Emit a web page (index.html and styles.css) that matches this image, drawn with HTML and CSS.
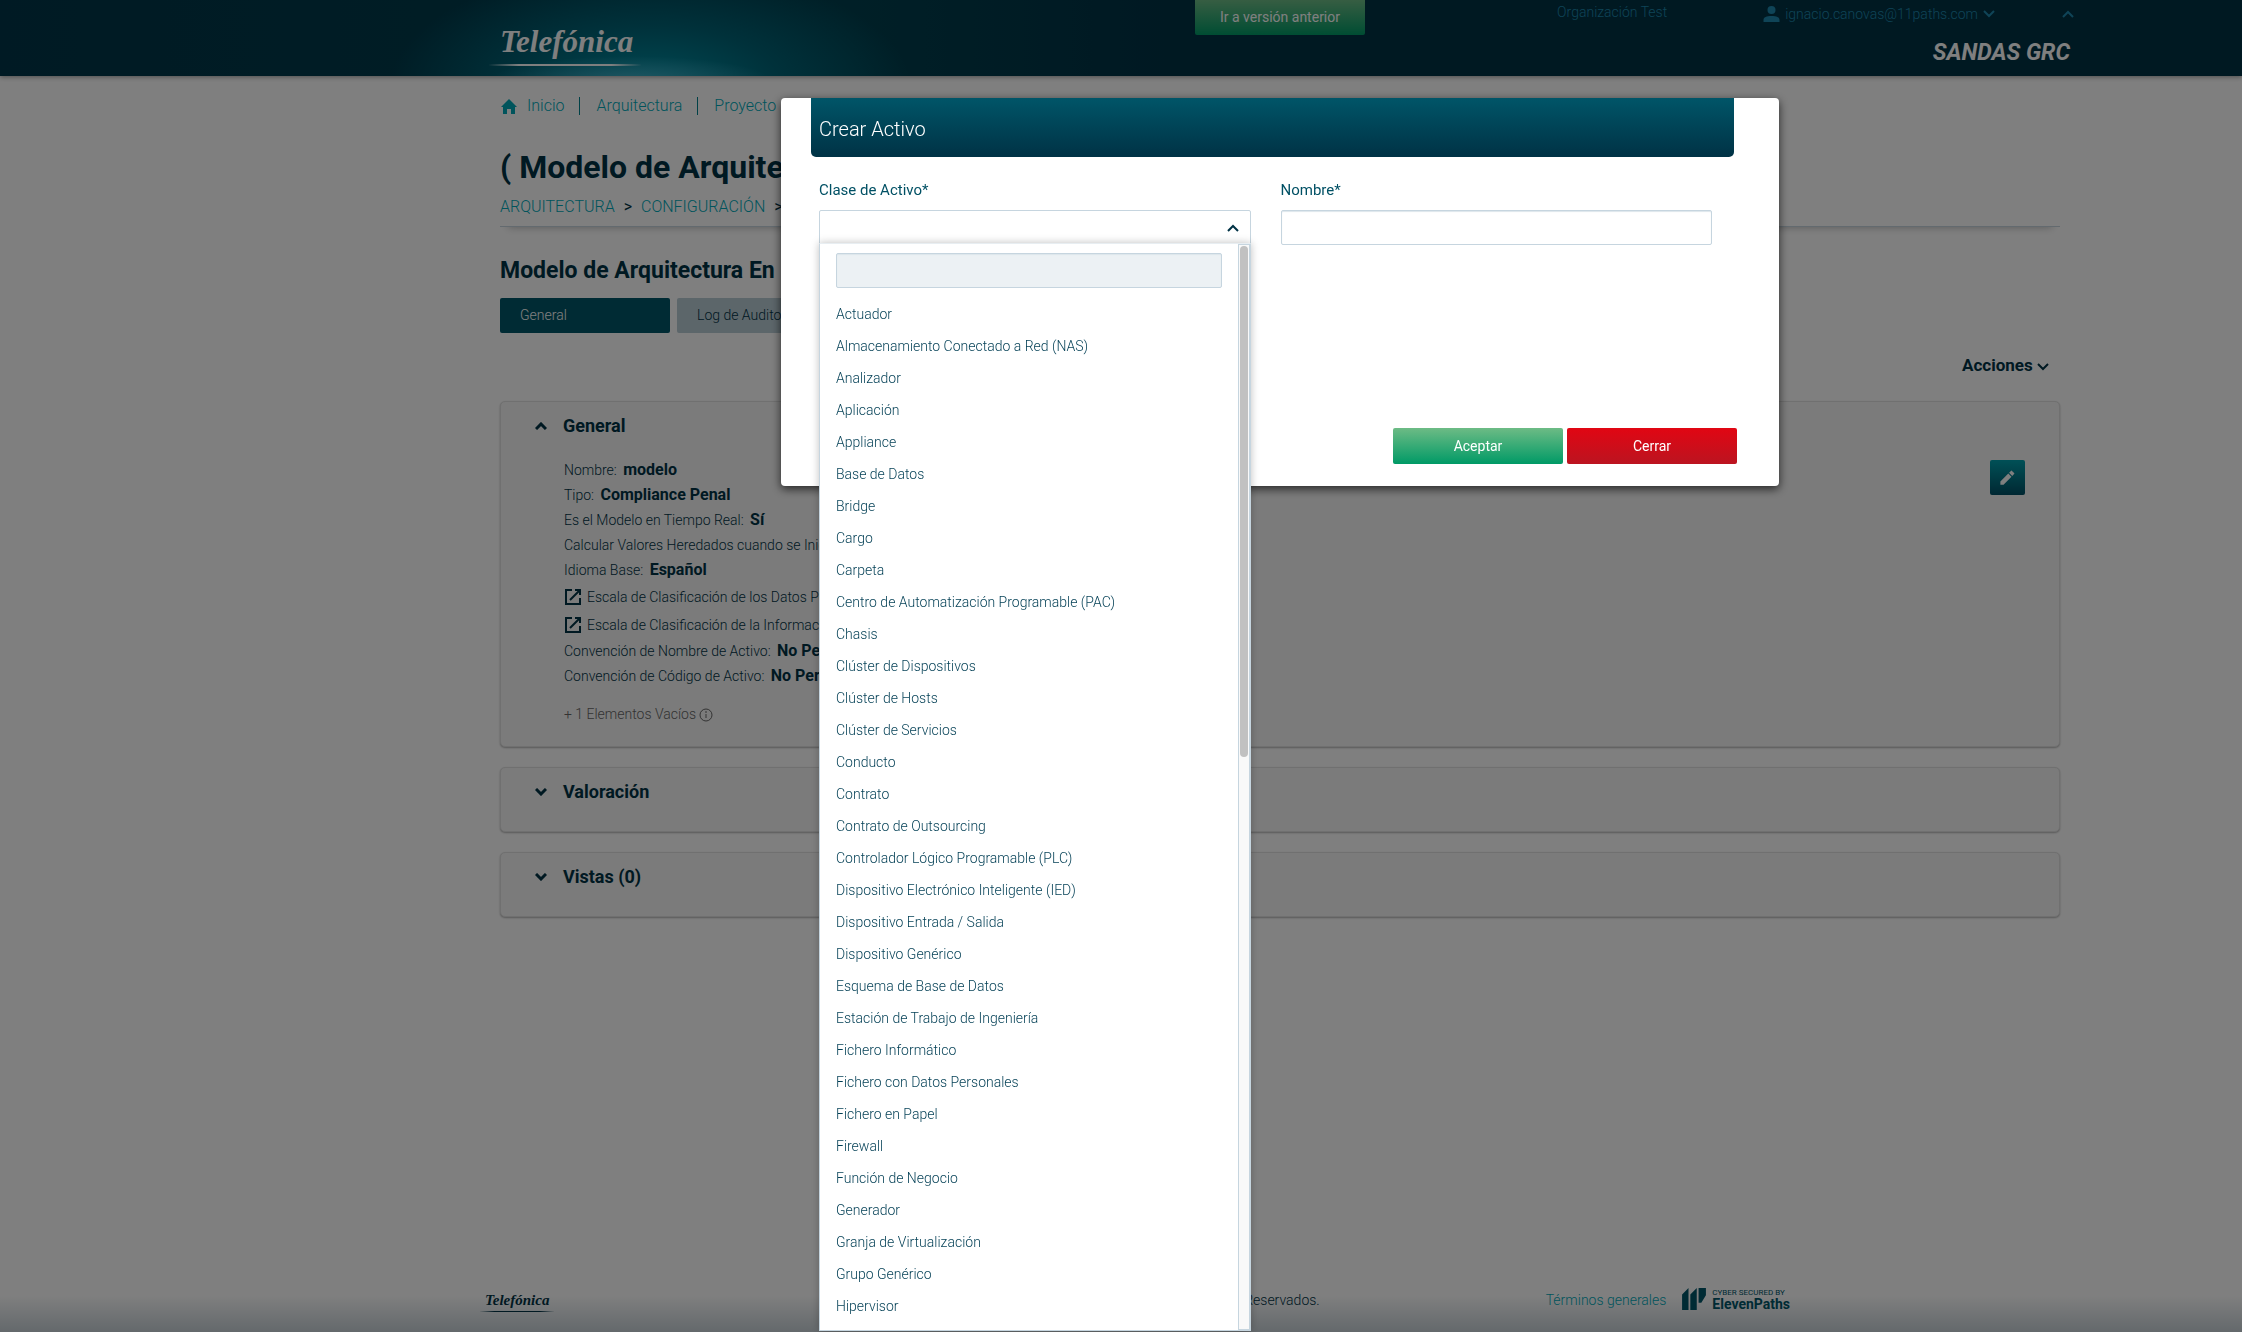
FILE: index.html
```html
<!DOCTYPE html>
<html lang="es">
<head>
    <meta charset="UTF-8">
    <meta name="viewport" content="width=device-width, initial-scale=1.0">
    <title>SANDAS GRC - Crear Activo</title>
    <link rel="stylesheet" href="styles.css">
</head>
<body>
    <header class="topbar">
        <a href="#" class="logo">Telefónica</a>
        <button type="button" class="btn btn-green btn-version">Ir a versión anterior</button>
        <div class="topbar-right">
            <div class="user-row">
                <a href="#" class="org">Organización Test</a>
                <a href="#" class="user">
                    <svg class="icon-user" viewBox="0 0 16 16"><ellipse cx="8" cy="4" rx="4" ry="4"/><path d="M0 16v-2c0-3 3-4 8-4s8 1 8 4v2z"/></svg>
                    <span>ignacio.canovas@11paths.com</span>
                    <svg class="chevron" viewBox="0 0 12 8"><path d="M1 1l5 5 5-5"/></svg>
                </a>
                <a href="#" class="collapse" aria-label="Ocultar"><svg class="chevron" viewBox="0 0 12 8"><path d="M1 7l5-5 5 5"/></svg></a>
            </div>
            <div class="product">SANDAS GRC</div>
        </div>
    </header>

    <main class="content">
        <nav class="breadcrumb">
            <svg class="icon-home" viewBox="0 0 16 15"><path d="M8 0l8 8h-2v7h-4v-5H6v5H2V8H0z"/></svg>
            <a href="#">Inicio</a>
            <a href="#">Arquitectura</a>
            <a href="#">Proyecto</a>
        </nav>

        <h1>( Modelo de Arquitectura )</h1>
        <nav class="path">
            <a href="#">ARQUITECTURA</a><span>&gt;</span><a href="#">CONFIGURACIÓN</a><span>&gt;</span>
        </nav>

        <h2>Modelo de Arquitectura En</h2>
        <div class="tabs">
            <button type="button" class="tab active">General</button>
            <button type="button" class="tab">Log de Auditoría</button>
        </div>

        <div class="actions">
            <button type="button">Acciones <svg class="chevron" viewBox="0 0 12 8"><path d="M1 1l5 5 5-5"/></svg></button>
        </div>

        <section class="panel panel-open">
            <h3><svg class="chevron" viewBox="0 0 12 8"><path d="M1 7l5-5 5 5"/></svg>General</h3>
            <div class="panel-body">
                <div class="details">
                    <p>Nombre: <b>modelo</b></p>
                    <p>Tipo: <b>Compliance Penal</b></p>
                    <p>Es el Modelo en Tiempo Real: <b>Sí</b></p>
                    <p>Calcular Valores Heredados cuando se Inici</p>
                    <p>Idioma Base: <b>Español</b></p>
                    <p class="with-icon"><svg class="icon-open" viewBox="0 0 18 18"><path d="M8 2H2v14h14v-6M11 2h5v5M16 2L6 12"/></svg>Escala de Clasificación de los Datos Per</p>
                    <p class="with-icon"><svg class="icon-open" viewBox="0 0 18 18"><path d="M8 2H2v14h14v-6M11 2h5v5M16 2L6 12"/></svg>Escala de Clasificación de la Informació</p>
                    <p>Convención de Nombre de Activo: <b>No Pe</b></p>
                    <p>Convención de Código de Activo: <b>No Per</b></p>
                    <p class="empty">+ 1 Elementos Vacíos <svg class="icon-info" viewBox="0 0 14 14"><circle cx="7" cy="7" r="6"/><path d="M7 6v4M7 3v2"/></svg></p>
                </div>
                <button type="button" class="edit" aria-label="Editar">
                    <svg viewBox="0 0 24 24"><path d="M3 17v4h4L17 11l-4-4zM14 6l4 4 2-2c1-1 1-1 0-2l-2-2c-1-1-1-1-2 0z"/></svg>
                </button>
            </div>
        </section>

        <section class="panel">
            <h3><svg class="chevron" viewBox="0 0 12 8"><path d="M1 1l5 5 5-5"/></svg>Valoración</h3>
        </section>
        <section class="panel">
            <h3><svg class="chevron" viewBox="0 0 12 8"><path d="M1 1l5 5 5-5"/></svg>Vistas (0)</h3>
        </section>
    </main>

    <footer class="footer">
        <span class="logo logo-small">Telefónica</span>
        <span class="copyright">Reservados.</span>
        <a href="#">Términos generales</a>
        <div class="elevenpaths">
            <svg viewBox="0 0 26 24"><path d="M0 24V7l7-7v24zM9 24V7l7-7v24zM18 0h8v8l-5 8h-3z"/></svg>
            <div><small>CYBER SECURED BY</small><strong>ElevenPaths</strong></div>
        </div>
    </footer>

    <div class="overlay">
        <form class="modal" role="dialog" aria-labelledby="modalTitle">
            <div class="modal-title" id="modalTitle">Crear Activo</div>
            <div class="fields">
                <div class="field">
                    <label for="clase">Clase de Activo*</label>
                    <div class="dropdown">
                        <select id="clase" name="clase"><option value=""></option></select>
                        <svg class="chevron" viewBox="0 0 12 8"><path d="M1 7l5-5 5 5"/></svg>
                        <div class="menu">
                            <div class="menu-main">
                                <input type="text" aria-label="Buscar">
                                <ul role="listbox" aria-label="Clase de Activo">
                                    <li role="option">Actuador</li>
                                    <li role="option">Almacenamiento Conectado a Red (NAS)</li>
                                    <li role="option">Analizador</li>
                                    <li role="option">Aplicación</li>
                                    <li role="option">Appliance</li>
                                    <li role="option">Base de Datos</li>
                                    <li role="option">Bridge</li>
                                    <li role="option">Cargo</li>
                                    <li role="option">Carpeta</li>
                                    <li role="option">Centro de Automatización Programable (PAC)</li>
                                    <li role="option">Chasis</li>
                                    <li role="option">Clúster de Dispositivos</li>
                                    <li role="option">Clúster de Hosts</li>
                                    <li role="option">Clúster de Servicios</li>
                                    <li role="option">Conducto</li>
                                    <li role="option">Contrato</li>
                                    <li role="option">Contrato de Outsourcing</li>
                                    <li role="option">Controlador Lógico Programable (PLC)</li>
                                    <li role="option">Dispositivo Electrónico Inteligente (IED)</li>
                                    <li role="option">Dispositivo Entrada / Salida</li>
                                    <li role="option">Dispositivo Genérico</li>
                                    <li role="option">Esquema de Base de Datos</li>
                                    <li role="option">Estación de Trabajo de Ingeniería</li>
                                    <li role="option">Fichero Informático</li>
                                    <li role="option">Fichero con Datos Personales</li>
                                    <li role="option">Fichero en Papel</li>
                                    <li role="option">Firewall</li>
                                    <li role="option">Función de Negocio</li>
                                    <li role="option">Generador</li>
                                    <li role="option">Granja de Virtualización</li>
                                    <li role="option">Grupo Genérico</li>
                                    <li role="option">Hipervisor</li>
                                </ul>
                            </div>
                            <div class="scrollbar"><div class="thumb"></div></div>
                        </div>
                    </div>
                </div>
                <div class="field">
                    <label for="nombre">Nombre*</label>
                    <input type="text" id="nombre" name="nombre">
                </div>
            </div>
            <div class="modal-buttons">
                <button type="button" class="btn btn-green">Aceptar</button>
                <button type="button" class="btn btn-red">Cerrar</button>
            </div>
        </form>
    </div>
</body>
</html>
```
FILE: styles.css
```css
* {
    box-sizing: border-box;
}
body {
    display: flex;
    flex-direction: column;
    min-height: 100vh;
    margin: 0;
    background-color: #fff;
    color: #003245;
    font-family: Roboto, "Noto Sans", sans-serif;
    font-size: 14px;
    font-weight: 300;
    line-height: 25px;
}
a {
    color: #00a9b8;
    text-decoration: none;
}
h1, h2, h3, p, ul {
    margin: 0;
    padding: 0;
}
b {
    margin-left: 3px;
    font-size: 16px;
    font-weight: 700;
    line-height: 16px;
}
button, input, select {
    font: inherit;
    color: inherit;
}
button {
    border: none;
    cursor: pointer;
}
.chevron {
    width: 12px;
    height: 8px;
    fill: none;
    stroke: currentColor;
    stroke-width: 2;
}

/* top bar */
.topbar {
    display: flex;
    align-items: flex-start;
    height: 76px;
    padding: 0 168px 0 489px;
    background:
        radial-gradient(ellipse 140px 24px at 630px 80px, rgba(90, 185, 210, 0.7), transparent),
        radial-gradient(ellipse 260px 120px at 650px 86px, #0094a8, rgba(0, 115, 135, 0.7) 50%, transparent),
        linear-gradient(to right, #003548, #003c4c 26%, #003f4e 38%, #003245 52%);
    box-shadow: 0 1px 5px rgba(0, 0, 0, 0.4);
}
.logo {
    width: 152px;
    margin-top: 20px;
    padding-left: 11px;
    border-bottom: 2px solid;
    border-image: linear-gradient(to right, transparent, currentColor 20%, currentColor 80%, transparent) 1;
    color: #fff;
    font-family: "Liberation Serif", serif;
    font-size: 31px;
    font-style: italic;
    font-weight: 700;
    line-height: 44px;
}
.btn {
    width: 170px;
    height: 36px;
    padding: 0;
    border-radius: 2px;
    color: #fff;
    font-weight: 400;
}
.btn-green {
    background: linear-gradient(#6dbb85, #009a66);
}
.btn-red {
    background: linear-gradient(#e10613, #bb1420);
}
.btn-version {
    height: 35px;
    margin: 0 auto 0 554px;
    border-radius: 0 0 2px 2px;
}
.topbar-right {
    display: flex;
    flex-direction: column;
    align-items: flex-end;
}
.user-row {
    display: flex;
    align-items: center;
    height: 28px;
}
.user-row a {
    color: #1e88ae;
}
.org {
    margin-right: 96px;
    padding-bottom: 4px;
}
.user {
    display: flex;
    align-items: center;
    gap: 5px;
    margin-right: 67px;
}
.icon-user {
    width: 17px;
    height: 16px;
    fill: currentColor;
}
.collapse {
    display: flex;
}
.product {
    margin: 12px 4px 0 0;
    color: #fff;
    font-size: 23px;
    font-style: italic;
    font-weight: 700;
}

/* page */
.content {
    flex: 1;
    margin: 0 182px 0 500px;
}
.breadcrumb {
    display: flex;
    align-items: center;
    margin-top: 21px;
    font-size: 16px;
}
.breadcrumb a {
    padding-right: 15px;
    margin-right: 16px;
    border-right: 1px solid #00838f;
    line-height: 18px;
}
.breadcrumb a:last-child {
    border: none;
}
.icon-home {
    width: 18px;
    height: 15px;
    margin-right: 9px;
    fill: #00a9b8;
}
h1 {
    margin-top: 32px;
    font-size: 32px;
    font-weight: 700;
    line-height: 40px;
}
.path {
    height: 40px;
    padding-top: 7px;
    border-bottom: 1px solid #c6d5df;
    font-size: 16px;
    box-shadow: 0 8px 8px -8px rgba(0, 0, 0, 0.3);
}
.path span {
    margin: 0 9px;
    font-weight: 400;
}
h2 {
    margin-top: 30px;
    font-size: 23px;
    font-weight: 700;
    line-height: 28px;
}
.tabs {
    display: flex;
    gap: 7px;
    margin-top: 13px;
}
.tab {
    width: 170px;
    height: 35px;
    padding: 0 20px;
    border-radius: 2px;
    background-color: #b9ccd5;
    text-align: left;
}
.tab.active {
    background-color: #005669;
    color: #fff;
}
.actions {
    margin: 20px 11px 22px;
    text-align: right;
}
.actions button {
    padding: 0;
    background: none;
    font-size: 17px;
    font-weight: 700;
}
.panel {
    min-height: 65px;
    margin-bottom: 20px;
    padding: 11px 34px 0 34px;
    border: 1px solid #e0e0e0;
    border-radius: 5px;
    background-color: #f6f6f6;
    box-shadow: 0 1px 2px rgba(0, 0, 0, 0.3);
}
.panel-open {
    padding-bottom: 19px;
}
h3 {
    display: flex;
    align-items: center;
    font-size: 18px;
    font-weight: 700;
    line-height: 26px;
}
h3 .chevron {
    margin-right: 16px;
    stroke-width: 3;
}
.panel-body {
    display: flex;
    justify-content: space-between;
    align-items: flex-start;
    padding: 19px 0 0 29px;
}
.with-icon {
    display: flex;
    align-items: center;
    gap: 5px;
    line-height: 28px;
}
.icon-open {
    width: 18px;
    height: 18px;
    fill: none;
    stroke: currentColor;
    stroke-width: 2;
}
.empty {
    margin-top: 13px;
    color: #666;
}
.icon-info {
    width: 14px;
    height: 14px;
    vertical-align: middle;
    fill: none;
    stroke: currentColor;
}
.edit {
    width: 35px;
    height: 35px;
    margin-top: 2px;
    padding: 8px;
    border-radius: 2px;
    background: linear-gradient(#00a0ad, #005065);
}
.edit svg {
    display: block;
    fill: #fff;
}

/* footer */
.footer {
    display: flex;
    align-items: flex-start;
    height: 52px;
    padding: 8px 452px 0 480px;
    background: linear-gradient(transparent 30%, #c8d2d8);
}
.logo-small {
    width: 74px;
    margin-top: 2px;
    padding-left: 5px;
    border-bottom-width: 1px;
    color: #003245;
    font-size: 15px;
    line-height: 21px;
}
.copyright {
    flex: 1;
    padding-right: 226px;
    text-align: right;
}
.elevenpaths {
    display: flex;
    gap: 5px;
    margin-left: 15px;
    color: #005669;
}
.elevenpaths svg {
    width: 26px;
    height: 22px;
    fill: currentColor;
}
.elevenpaths div {
    display: flex;
    flex-direction: column;
}
.elevenpaths small {
    font-size: 8px;
    font-weight: 400;
    line-height: 9px;
}
.elevenpaths strong {
    font-size: 14px;
    font-weight: 700;
    line-height: 15px;
}

/* modal */
.overlay {
    position: fixed;
    inset: 0;
    padding: 98px 463px 0 781px;
    background-color: rgba(0, 0, 0, 0.5);
}
.modal {
    padding-bottom: 22px;
    border-radius: 4px;
    background-color: #fff;
    box-shadow: 0 3px 10px rgba(0, 0, 0, 0.7);
}
.modal-title {
    margin: 0 45px 0 30px;
    padding: 3px 0 0 8px;
    border-radius: 0 0 5px 5px;
    background: linear-gradient(#005568, #003245);
    color: #fff;
    font-size: 20px;
    line-height: 56px;
}
.fields {
    display: grid;
    grid-template-columns: 1fr 1fr;
    gap: 30px;
    margin: 21px 67px 0 38px;
}
label {
    display: block;
    margin-bottom: 7px;
    color: #005064;
    font-size: 15px;
    font-weight: 400;
}
.field input, select {
    display: block;
    width: 100%;
    height: 35px;
    border: 1px solid #c6d5df;
    border-radius: 2px;
    background-color: #fff;
    box-shadow: inset 0 1px 1px #dde6ec;
}
.dropdown {
    position: relative;
}
.field select {
    appearance: none;
    box-shadow: none;
}
.dropdown > .chevron {
    position: absolute;
    top: 14px;
    right: 12px;
}
.menu {
    position: absolute;
    top: 33px;
    left: 0;
    display: flex;
    width: 100%;
    border: 1px solid #c6d5df;
    border-top-color: #e8eef2;
    background-color: #fff;
    box-shadow: 0 0 8px rgba(0, 0, 0, 0.25);
}
.menu-main {
    flex: 1;
    padding: 9px 16px 8px;
}
.menu-main input {
    background-color: #ecf1f4;
}
.menu ul {
    margin-top: 10px;
    color: #003e54;
    line-height: 32px;
    list-style: none;
}
.scrollbar {
    width: 12px;
    padding: 1px;
    border: 1px solid #c6d5df;
    background-color: #f9f9f9;
}
.thumb {
    height: 511px;
    border-radius: 4px;
    background-color: #c1c1c1;
}
.modal-buttons {
    display: flex;
    justify-content: flex-end;
    gap: 4px;
    margin: 183px 42px 0 0;
}
```
